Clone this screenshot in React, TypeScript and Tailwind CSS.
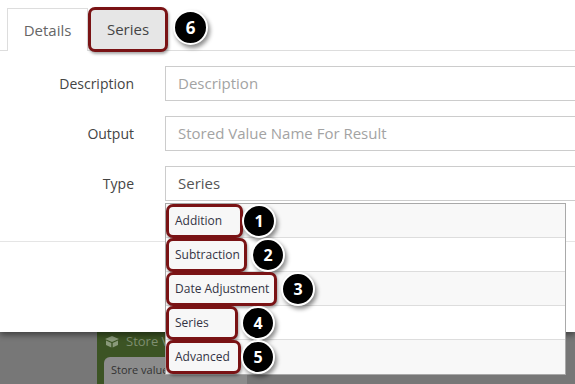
import type { ReactNode } from "react";

const Badge = ({ n, className = "" }: { n: number; className?: string }) => (
  <span
    className={`flex h-[34px] w-[34px] shrink-0 items-center justify-center rounded-full border-2 border-white bg-black text-[16px] font-bold text-white shadow-[2px_3px_4px_rgba(0,0,0,0.45)] ${className}`}
  >
    {n}
  </span>
);

const Callout = ({ children, className = "" }: { children: ReactNode; className?: string }) => (
  <span
    className={`flex shrink-0 items-center rounded-[7px] border-[3px] border-[#7a1315] shadow-[1px_2px_3px_rgba(0,0,0,0.35)] ${className}`}
  >
    {children}
  </span>
);

const FormRow = ({ label, children }: { label: string; children: ReactNode }) => (
  <div className="flex items-center">
    <label className="w-[135px] pr-[1px] text-right text-[14px] text-[#444]">{label}</label>
    <div className="ml-[30px] flex-1">{children}</div>
  </div>
);

const options = [
  { label: "Addition", w: "w-[77px]", gap: "-ml-[1px]" },
  { label: "Subtraction", w: "w-[81px]", gap: "ml-[4px]" },
  { label: "Date Adjustment", w: "w-[111px]", gap: "ml-[4px]" },
  { label: "Series", w: "w-[72px]", gap: "ml-[3px]" },
  { label: "Advanced", w: "w-[75px]", gap: "ml-0" },
];

export default function App() {
  return (
    <div className="relative h-[384px] w-[575px] overflow-hidden bg-[#777777] font-['Open_Sans',sans-serif]">
      <div className="relative z-10 h-[332px] bg-white shadow-[0_3px_6px_rgba(0,0,0,0.45)]">
        {/* tabs */}
        <div className="flex items-end border-b border-[#dddddd] pl-[7px] pt-[7px]">
          <div className="-mb-px flex h-[43px] w-[81px] items-center justify-center border border-b-0 border-[#dddddd] bg-white text-[15px] text-[#666]">
            Details
          </div>
          <Callout className="-mb-[2px] h-[45px] w-[80px] justify-center bg-[#e6e6e6] text-[15px] text-[#444]">
            Series
          </Callout>
          <Badge n={6} className="mb-[5px] ml-[5px] h-[35px] w-[35px] text-[17px]" />
        </div>

        {/* form */}
        <div className="flex w-[620px] flex-col gap-[15px] pt-[15px]">
          <FormRow label="Description">
            <div className="flex h-[35px] items-center border border-[#cccccc] px-[12px] text-[15px] text-[#a3a3a3]">
              Description
            </div>
          </FormRow>
          <FormRow label="Output">
            <div className="flex h-[35px] items-center border border-[#cccccc] px-[12px] text-[15px] text-[#a3a3a3]">
              Stored Value Name For Result
            </div>
          </FormRow>
          <FormRow label="Type">
            <div className="relative">
              <div className="flex h-[35px] items-center border border-[#cccccc] px-[12px] text-[15px] text-[#555]">
                Series
              </div>
              <ul className="absolute left-0 top-full z-20 mt-[2px] w-[401px] border border-[#a9a9a9] bg-white">
                {options.map((o, i) => (
                  <li
                    key={o.label}
                    className={`flex h-[34px] items-center border-[#dddddd] ${i < options.length - 1 ? "border-b" : ""} ${i % 2 === 0 ? "bg-[#f8f8f8]" : "bg-white"}`}
                  >
                    <Callout className={`h-[34px] ${o.w} bg-[#f7f7f7] pl-[6px] text-[12px] text-[#333344]`}>
                      {o.label}
                    </Callout>
                    <Badge n={i + 1} className={o.gap} />
                  </li>
                ))}
              </ul>
            </div>
          </FormRow>
        </div>

        <div className="mt-[40px] border-t border-[#e5e5e5]" />
      </div>

      {/* dimmed page behind the dialog */}
      <div className="-mt-[12px] ml-[97px] h-[70px] w-[150px] bg-[#3c5424] pl-[7px] pt-[12px]">
        <div className="flex items-center gap-[6px] text-[13px] text-[#7f8f70]">
          <svg width="16" height="13" viewBox="0 0 16 13">
            <path d="M1 4 L8 1 L15 4 L8 7 Z" fill="#8a9a7a" />
            <path d="M2 5.5 L7.3 8 V12.5 L2 10 Z M14 5.5 L8.7 8 V12.5 L14 10 Z" fill="#8a9a7a" />
          </svg>
          Store Value
        </div>
        <div className="mt-[5px] h-[40px] rounded-t-[6px] bg-[#8c8c8c] px-[7px] pt-[5px] text-[11px] text-[#333]">
          Store value '11'
        </div>
      </div>
    </div>
  );
}
